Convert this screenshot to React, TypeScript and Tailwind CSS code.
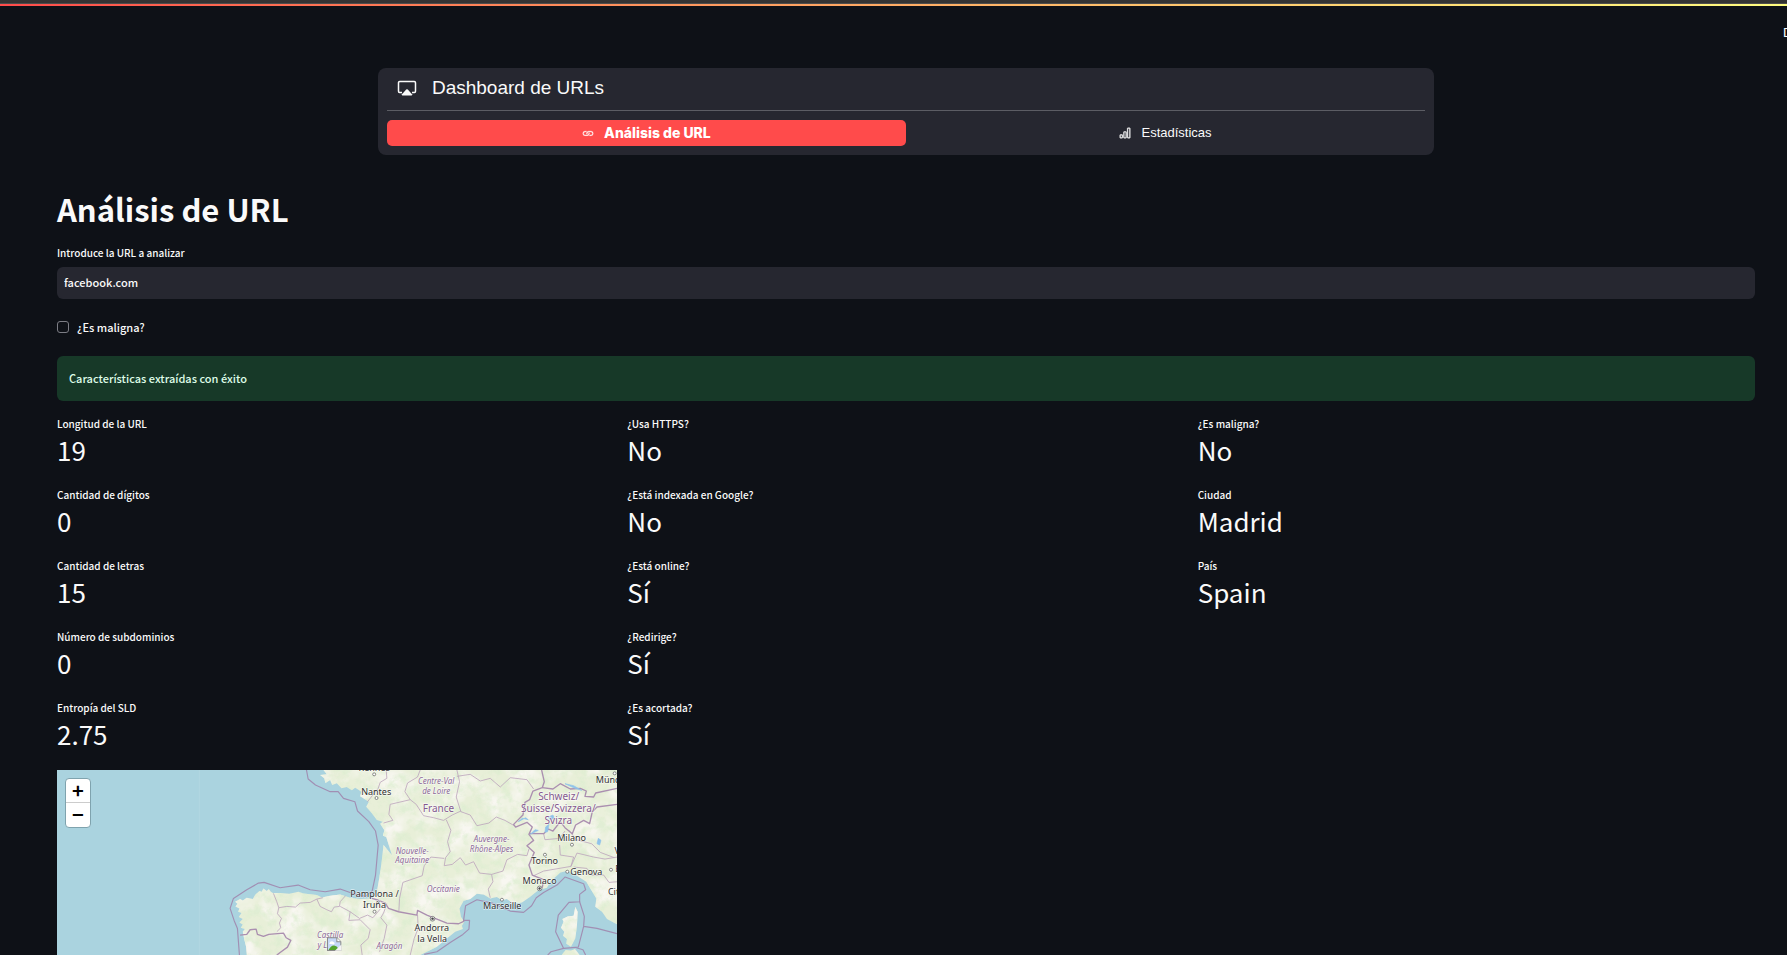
import React from "react";
import { BsBarChart, BsLink } from "react-icons/bs";

type Metric = { label: string; value: string };

const columns: Metric[][] = [
  [
    { label: "Longitud de la URL", value: "19" },
    { label: "Cantidad de dígitos", value: "0" },
    { label: "Cantidad de letras", value: "15" },
    { label: "Número de subdominios", value: "0" },
    { label: "Entropía del SLD", value: "2.75" },
  ],
  [
    { label: "¿Usa HTTPS?", value: "No" },
    { label: "¿Está indexada en Google?", value: "No" },
    { label: "¿Está online?", value: "Sí" },
    { label: "¿Redirige?", value: "Sí" },
    { label: "¿Es acortada?", value: "Sí" },
  ],
  [
    { label: "¿Es maligna?", value: "No" },
    { label: "Ciudad", value: "Madrid" },
    { label: "País", value: "Spain" },
  ],
];

const MAINLAND =
  "M-250 570 L-252 545 L-258 520 L-262 500 L-256 492 L-268 488 L-262 478 L-272 472 L-262 462 L-274 456 L-266 444 L-276 440 L-272 430 L-284 424 L-278 416 L-285 410 L-270 402 L-262 406 L-250 398 L-232 402 L-224 388 L-212 378 L-205 380 L-200 370 L-190 378 L-184 372 L-178 380 L-172 384 L-150 384 L-122 386 L-95 380 L-80 385 L-40 390 L-25 397 L0 392 L30 388 L60 398 L90 402 L125 400 L140 380 L148 335 L155 285 L160 240 L185 270 L168 215 L158 212 L163 196 L150 176 L158 170 L140 165 L125 145 L108 125 L116 110 L90 94 L94 80 L75 68 L65 76 L50 66 L34 70 L20 55 L6 60 L0 45 L-14 54 L-18 40 L-30 30 L-10 28 L-20 15 H861 V478 L830 462 L815 440 L795 425 L798 400 L780 370 L768 350 L730 325 L710 318 L690 322 L660 350 L650 368 L625 375 L600 395 L575 412 L550 416 L530 402 L515 405 L500 396 L480 400 L460 388 L440 386 L420 402 L400 407 L388 430 L392 455 L402 470 L395 482 L398 492 L375 500 L350 520 L320 545 L290 560 L270 570 Z";
const CORSICA =
  "M735 425 L742 440 L740 480 L735 520 L722 545 L708 536 L710 522 L698 512 L702 500 L692 488 L700 470 L696 462 L712 454 L730 452 Z";
const SARDINIA = "M694 570 L706 555 L722 556 L734 552 L748 570 Z";

const NATIONAL = [
  "M-270 510 L-250 508 L-240 494 L-222 492 L-218 508 L-200 514 L-184 508 L-140 504 L-132 518 L-118 526 L-128 546 L-150 562 L-160 570",
  "M125 400 L140 404 L165 414 L175 430 L205 440 L260 450 L262 436 L290 450 L320 462 L350 474 L385 476 L402 468",
  "M634 15 L642 50 L636 68 L608 78 L598 104 L584 112 L578 150 L550 178 L556 186 L590 172 L606 186 L596 208 L610 226 L590 242 L612 262 L596 300 L606 330 L640 344 L636 368",
  "M636 68 L668 72 L690 56 L720 72 L750 70 L768 78 L764 94 L790 96 L796 84 L861 70",
  "M598 206 L640 206 L655 192 L668 198 L690 170 L704 188 L726 206 L736 180 L760 166 L778 176 L786 140 L800 126 L861 118",
];

const REGIONAL = [
  "M-170 385 L-160 410 L-154 428 L-158 446 L-146 460 L-152 474 L-148 488 L-160 500",
  "M-154 428 L-130 424 L-104 426 L-90 414 L-60 412 L-40 402 L-22 398",
  "M-40 402 L-30 424 L-10 434 L4 440 L12 426 L28 424 L30 410 L46 392",
  "M30 424 L60 440 L56 466 L90 464 L120 494 L114 520 L92 540 L96 570",
  "M60 440 L88 460 L112 450 L128 458 L150 432",
  "M170 416 L160 444 L152 458 L170 480 L162 520 L148 560",
  "M262 450 L264 490 L252 520 L240 570",
  "M112 110 L144 70 L150 52 L170 40 L168 15",
  "M160 174 L188 166 L176 148 L180 118 L240 104 L258 118 L280 152 L310 158 L340 166 L366 150 L392 138",
  "M240 104 L224 80 L232 54 L262 36 L270 15",
  "M380 15 L388 50 L378 96 L392 140 L420 150 L440 182 L476 174 L498 156 L524 166 L552 182",
  "M380 34 L420 28 L450 48 L480 40 L510 66 L540 38 L590 44 L610 72",
  "M348 164 L362 196 L352 230 L360 260 L346 278 L342 302 L366 298 L390 278 L406 300 L430 290 L448 324 L484 328",
  "M342 280 L302 276 L282 302 L276 332 L218 352 L208 400 L206 438",
  "M484 328 L518 318 L530 284 L562 268 L590 272 L596 252",
  "M484 328 L488 350 L474 372 L480 398",
  "M640 206 L644 224 L688 220 L704 198",
  "M688 240 L690 270 L730 276 L722 304 L640 318 L610 332",
  "M722 304 L740 264 L790 276 L824 282 L861 276",
  "M716 196 L738 224 L784 236 L810 262 L852 278",
  "M730 306 L770 310 L784 330 L820 330 L836 352 L861 350",
];

const MARITIME = [
  "M-71 15 L-66 42 L-44 60 L0 80 L24 80 L40 100 L74 110 L82 138 L116 170 L136 198 L144 240 L136 330 L126 378 L106 394 L64 384 L30 372 L-15 380 L-60 374 L-96 360 L-150 368 L-198 352 L-215 354 L-250 374 L-290 400 L-300 430 L-288 466 L-278 490 L-272 570",
  "M282 568 L320 560 L360 532 L398 508 L416 492 L418 466 L400 466 L406 422 L440 404 L486 414 L540 438 L580 442 L604 422 L618 398 L640 382 L680 360 L704 336 L760 356 L766 374 L748 388 L748 410 L716 412 L684 450 L676 500 L700 550 L662 560 L652 570",
  "M748 410 L762 454 L760 484 L744 546 L700 550 M760 484 L800 490 L861 506 M738 548 L758 554 L766 570",
];

const LAKES = [
  "M564 170 L586 158 L594 164 L576 160 Z",
  "M600 208 L614 194 L624 196 Z",
  "M654 156 L668 150 L672 160 L660 164 Z",
  "M646 186 L656 178 L652 200 L644 202 Z",
  "M704 56 L730 62 L754 76 L734 70 Z",
  "M804 220 L812 226 L808 240 L800 236 Z",
];

const places: { x: number; y: number; text: string }[] = [
  { x: 132, y: 18, text: "Rennes" },
  { x: 138, y: 89, text: "Nantes" },
  { x: 840, y: 54, text: "Münch" },
  { x: 724, y: 228, text: "Milano" },
  { x: 643, y: 297, text: "Torino" },
  { x: 768, y: 330, text: "Genova" },
  { x: 628, y: 356, text: "Monaco" },
  { x: 516, y: 432, text: "Marseille" },
  { x: 133, y: 397, text: "Pamplona /" },
  { x: 133, y: 430, text: "Iruña" },
  { x: 305, y: 498, text: "Andorra" },
  { x: 306, y: 530, text: "la Vella" },
  { x: 876, y: 267, text: "Ven" },
  { x: 892, y: 322, text: "Bolog" },
  { x: 862, y: 390, text: "Città" },
];

const regions: { x: number; y: number; text: string }[] = [
  { x: 318, y: 57, text: "Centre-Val" },
  { x: 318, y: 86, text: "de Loire" },
  { x: 484, y: 231, text: "Auvergne-" },
  { x: 484, y: 260, text: "Rhône-Alpes" },
  { x: 246, y: 266, text: "Nouvelle-" },
  { x: 246, y: 295, text: "Aquitaine" },
  { x: 339, y: 382, text: "Occitanie" },
  { x: 178, y: 552, text: "Aragón" },
  { x: 0, y: 518, text: "Castilla" },
  { x: -4, y: 548, text: "y León" },
];

const countries: { x: number; y: number; text: string }[] = [
  { x: 325, y: 140, text: "France" },
  { x: 685, y: 106, text: "Schweiz/" },
  { x: 684, y: 140, text: "Suisse/Svizzera/" },
  { x: 684, y: 176, text: "Svizra" },
];

const towns: [number, number][] = [
  [132, 28], [139, 99], [853, 25], [725, 239], [644, 269], [711, 320],
  [515, 404], [133, 440], [842, 314],
];
const capitals: [number, number][] = [[628, 370], [307, 461]];

function MapDrawing() {
  return (
    <svg
      viewBox="-819 15 1680 555"
      preserveAspectRatio="xMidYMin slice"
      className="block h-full w-full"
      role="img"
      aria-label="Mapa"
    >
      <defs>
        <clipPath id="land">
          <path d={MAINLAND} />
          <path d={CORSICA} />
          <path d={SARDINIA} />
        </clipPath>
        <filter id="woods" x="0" y="0" width="100%" height="100%">
          <feTurbulence type="fractalNoise" baseFrequency="0.035" numOctaves="5" seed="8" />
          <feColorMatrix values="0 0 0 0 0.72  0 0 0 0 0.85  0 0 0 0 0.63  3.2 0 0 0 -1.45" />
        </filter>
        <filter id="fields" x="0" y="0" width="100%" height="100%">
          <feTurbulence type="fractalNoise" baseFrequency="0.012" numOctaves="4" seed="21" />
          <feColorMatrix values="0 0 0 0 0.94  0 0 0 0 0.93  0 0 0 0 0.88  0 3 0 0 -1.2" />
        </filter>
      </defs>
      <rect x="-819" y="15" width="1680" height="555" fill="#aad3df" />
      <path d="M-392 15 V570" stroke="#b3d8e2" strokeWidth="2" />
      <g clipPath="url(#land)">
        <rect x="-300" y="15" width="1161" height="555" fill="#e8efd8" />
        <rect x="-300" y="15" width="1161" height="555" filter="url(#fields)" />
        <rect x="-300" y="15" width="1161" height="555" filter="url(#woods)" opacity="0.75" />
      </g>
      <g fill="none" stroke="#a18fb3" strokeWidth="3.5" strokeLinejoin="round">
        {MARITIME.map((d) => (
          <path key={d} d={d} />
        ))}
      </g>
      <g fill="none" stroke="#bda6bd" strokeWidth="2.5" strokeLinejoin="round">
        {REGIONAL.map((d) => (
          <path key={d} d={d} />
        ))}
      </g>
      <g fill="none" stroke="#ab8fb0" strokeWidth="4" strokeLinejoin="round">
        {NATIONAL.map((d) => (
          <path key={d} d={d} />
        ))}
      </g>
      <g fill="#8fc3ea" stroke="#8fc3ea" strokeWidth="2">
        {LAKES.map((d) => (
          <path key={d} d={d} />
        ))}
      </g>
      <g fill="#fff" stroke="#555" strokeWidth="2">
        {towns.map(([x, y]) => (
          <circle key={x} cx={x} cy={y} r="4.5" />
        ))}
        {capitals.map(([x, y]) => (
          <g key={x}>
            <circle cx={x} cy={y} r="7" />
            <circle cx={x} cy={y} r="3" fill="#444" />
          </g>
        ))}
      </g>
      <g
        className="[font-family:'Noto_Sans',sans-serif]"
        textAnchor="middle"
        stroke="#fff"
        strokeOpacity="0.6"
        strokeWidth="4"
        strokeLinejoin="round"
        paintOrder="stroke"
      >
        <g fontSize="24" fontStyle="italic" fill="#8d6a98">
          {regions.map((l) => (
            <text key={l.text} x={l.x} y={l.y}>{l.text}</text>
          ))}
        </g>
        <g fontSize="30" fill="#84598f">
          {countries.map((l) => (
            <text key={l.text} x={l.x} y={l.y}>{l.text}</text>
          ))}
        </g>
        <g fontSize="27" fill="#303030">
          {places.map((l) => (
            <text key={l.text} x={l.x} y={l.y}>{l.text}</text>
          ))}
        </g>
      </g>
      <g>
        <path d="M-8 518 H20 L32 530 V556 H-8 Z" fill="#c6d8f7" stroke="#8a8a8a" strokeWidth="3" />
        <path d="M20 518 V530 H32" fill="#fff" stroke="#8a8a8a" strokeWidth="3" />
        <path d="M-3 536 Q2 524 12 532 Q16 536 10 538 Z" fill="#fff" />
        <path d="M-5 555 Q2 540 12 541 Q20 542 26 552 L22 555 Z" fill="#54a52e" />
        <path d="M14 557 L34 538 V557 Z" fill="#f4f4f4" />
      </g>
    </svg>
  );
}

function CastIcon() {
  return (
    <svg viewBox="0 0 20 16" className="h-4 w-5" fill="none" aria-hidden="true">
      <path
        d="M5 12.5 H2.6 A1.2 1.2 0 0 1 1.5 11.3 V2.7 A1.2 1.2 0 0 1 2.7 1.5 H17.3 A1.2 1.2 0 0 1 18.5 2.7 V11.3 A1.2 1.2 0 0 1 17.4 12.5 H15"
        stroke="#fafafa"
        strokeWidth="1.5"
      />
      <path d="M9.2 9.6 Q10 8.9 10.8 9.6 L15 14.2 Q15.4 15.5 14.4 15.5 H5.6 Q4.6 15.5 5 14.2 Z" fill="#fafafa" />
    </svg>
  );
}

function MetricItem({ label, value }: Metric) {
  return (
    <div className="h-[71px]">
      <dt className="text-[10px] leading-4 font-medium">{label}</dt>
      <dd className="text-[26px] leading-9">{value}</dd>
    </div>
  );
}

export default function App() {
  return (
    <div className="flex h-screen flex-col overflow-hidden bg-[#0e1117] text-[#fafafa] [font-family:'Noto_Sans_CJK_JP',sans-serif]">
      <div className="h-1 shrink-0 border-b border-[#4c4c4c] bg-[#333333]" />
      <div className="h-0.5 shrink-0 bg-linear-to-r from-[#ff4b4b] to-[#fffd80]" />
      <header className="flex h-[62px] shrink-0 justify-end overflow-hidden pt-4">
        <button type="button" className="-mr-8 h-5 w-9 shrink-0 text-left text-[11px] leading-5 font-medium">
          Deploy
        </button>
      </header>

      <main className="flex min-h-0 flex-1 flex-col pr-8 pl-[57px]">
        <nav className="mx-auto w-[62.2%] shrink-0 rounded-lg bg-[#262730] px-[9px] pb-[9px] [font-family:'Liberation_Sans',Arial,sans-serif]">
          <div className="flex h-[43px] items-center gap-[15px] border-b border-[#5c5d64] pb-[3px] pl-[10px]">
            <CastIcon />
            <span className="text-[19px] leading-6">Dashboard de URLs</span>
          </div>
          <div className="grid grid-cols-2 pt-[9px] text-[13px] leading-[26px]">
            <a
              href="#analisis"
              className="flex h-[26px] items-center justify-center gap-2.5 rounded-[5px] bg-[#ff4b4b] text-sm leading-[26px] font-extrabold text-white [font-family:Inter,sans-serif]"
            >
              <BsLink className="size-3" stroke="currentColor" strokeWidth="0.4" />
              Análisis de URL
            </a>
            <a href="#estadisticas" className="flex h-[26px] items-center justify-center gap-2.5">
              <BsBarChart className="size-3" stroke="currentColor" strokeWidth="0.5" />
              Estadísticas
            </a>
          </div>
        </nav>

        <h1 className="shrink-0 pt-[31px] text-[31px] leading-[46px] font-bold">Análisis de URL</h1>

        <label htmlFor="url" className="mt-[13px] shrink-0 text-[10px] leading-4 font-medium">
          Introduce la URL a analizar
        </label>
        <input
          id="url"
          type="text"
          defaultValue="facebook.com"
          className="mt-[6px] h-8 shrink-0 rounded-md bg-[#262730] px-[7px] pb-0.5 text-[11px] font-medium outline-none"
        />

        <label className="mt-[18px] flex shrink-0 items-center gap-2 text-[11px] leading-5 font-medium">
          <input
            type="checkbox"
            className="size-3 appearance-none rounded-[3px] border border-[#7c7d85]"
          />
          ¿Es maligna?
        </label>

        <div role="status" className="mt-[19px] flex h-[45px] shrink-0 items-center rounded-md bg-[#173928] px-3 text-[11px] font-medium text-[#dffde9]">
          Características extraídas con éxito
        </div>

        <div className="mt-[15px] grid shrink-0 grid-cols-3 gap-x-[13px]">
          {columns.map((items) => (
            <dl key={items[0].label}>
              {items.map((m) => (
                <MetricItem key={m.label} label={m.label} value={m.value} />
              ))}
            </dl>
          ))}
        </div>

        <div className="relative -mt-px min-h-0 w-[33%] flex-1 overflow-hidden bg-[#aad3df]">
          <MapDrawing />
          <div className="absolute top-2 left-2 flex w-[26px] flex-col rounded-sm border border-[#7fa3ae] bg-white text-black">
            <button type="button" aria-label="Acercar" className="flex h-6 items-center justify-center border-b border-[#ccc] pb-0.5 text-xl leading-none font-bold">
              +
            </button>
            <button type="button" aria-label="Alejar" className="flex h-6 items-center justify-center pb-0.5 text-xl leading-none font-bold">
              −
            </button>
          </div>
        </div>
      </main>
    </div>
  );
}
